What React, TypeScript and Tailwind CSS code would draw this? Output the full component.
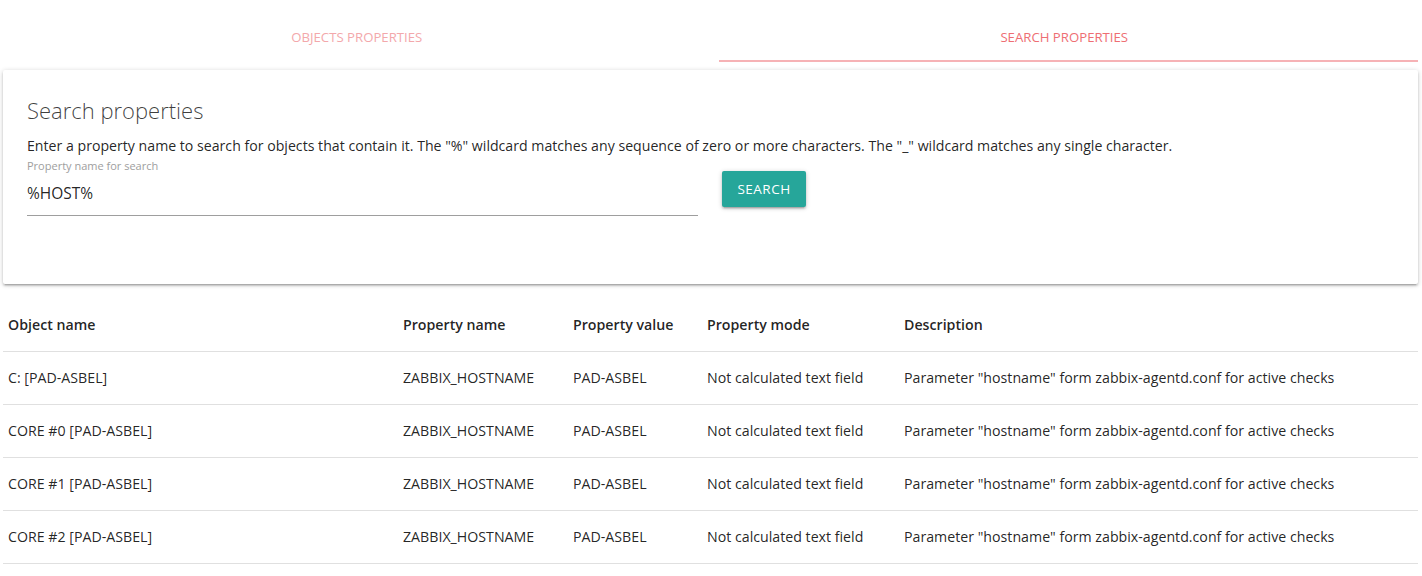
const rows = [
  'C: [PAD-ASBEL]',
  'CORE #0 [PAD-ASBEL]',
  'CORE #1 [PAD-ASBEL]',
  'CORE #2 [PAD-ASBEL]',
];

export default function App() {
  return (
    <div className="min-h-screen bg-white pl-[3px] pr-[4px] text-[rgba(0,0,0,0.87)]" style={{ fontFamily: '"Open Sans", sans-serif' }}>
      {/* tabs */}
      <div className="mt-[14px] flex h-[48px]">
        <div className="flex flex-1 items-center justify-center text-[13.2px] uppercase text-[#f3a8ab]">Objects properties</div>
        <div className="relative flex flex-1 items-center justify-center text-[13.2px] uppercase text-[#ee6e73]">
          Search properties
          <div className="absolute bottom-0 left-[8px] right-0 h-[2px] bg-[#f6b2b5]" />
        </div>
      </div>

      {/* card */}
      <div className="mt-[8px] h-[214px] rounded-[2px] bg-white px-[24px] pt-[24px] shadow-[0_2px_2px_0_rgba(0,0,0,0.14),0_3px_1px_-2px_rgba(0,0,0,0.12),0_1px_5px_0_rgba(0,0,0,0.2)]">
        <div className="text-[22px] font-light leading-[32px] text-[rgba(0,0,0,0.75)]">Search properties</div>
        <p className="mt-[9px] text-[14.15px] leading-[22px]">
          Enter a property name to search for objects that contain it. The "%" wildcard matches any sequence of zero or more characters. The "_" wildcard matches any single character.
        </p>
        <div className="mt-[2px] flex items-start">
          <div className="w-[671px]">
            <div className="text-[11px] leading-[14px] text-[#9e9e9e]">Property name for search</div>
            <div className="flex h-[43px] items-center border-b border-[#9e9e9e] text-[15.5px]">%HOST%</div>
          </div>
          <button className="ml-[24px] mt-[12px] h-[36px] w-[84px] rounded-[2px] bg-[#26a69a] text-[13.5px] uppercase tracking-[0.5px] text-white shadow-[0_2px_2px_0_rgba(0,0,0,0.14),0_3px_1px_-2px_rgba(0,0,0,0.12),0_1px_5px_0_rgba(0,0,0,0.2)]">
            Search
          </button>
        </div>
      </div>

      {/* table */}
      <table className="mt-[15px] w-full border-collapse text-[14.2px]">
        <thead>
          <tr className="border-b border-[rgba(0,0,0,0.12)]">
            <th className="h-[52px] w-[395px] px-[5px] text-left font-semibold">Object name</th>
            <th className="w-[170px] px-[5px] text-left font-semibold">Property name</th>
            <th className="w-[134px] px-[5px] text-left font-semibold">Property value</th>
            <th className="w-[197px] px-[5px] text-left font-semibold">Property mode</th>
            <th className="px-[5px] text-left font-semibold">Description</th>
          </tr>
        </thead>
        <tbody>
          {rows.map((r) => (
            <tr key={r} className="border-b border-[rgba(0,0,0,0.12)]">
              <td className="h-[53px] px-[5px]">{r}</td>
              <td className="px-[5px]">ZABBIX_HOSTNAME</td>
              <td className="px-[5px]">PAD-ASBEL</td>
              <td className="px-[5px]">Not calculated text field</td>
              <td className="px-[5px]">Parameter "hostname" form zabbix-agentd.conf for active checks</td>
            </tr>
          ))}
        </tbody>
      </table>
    </div>
  );
}
